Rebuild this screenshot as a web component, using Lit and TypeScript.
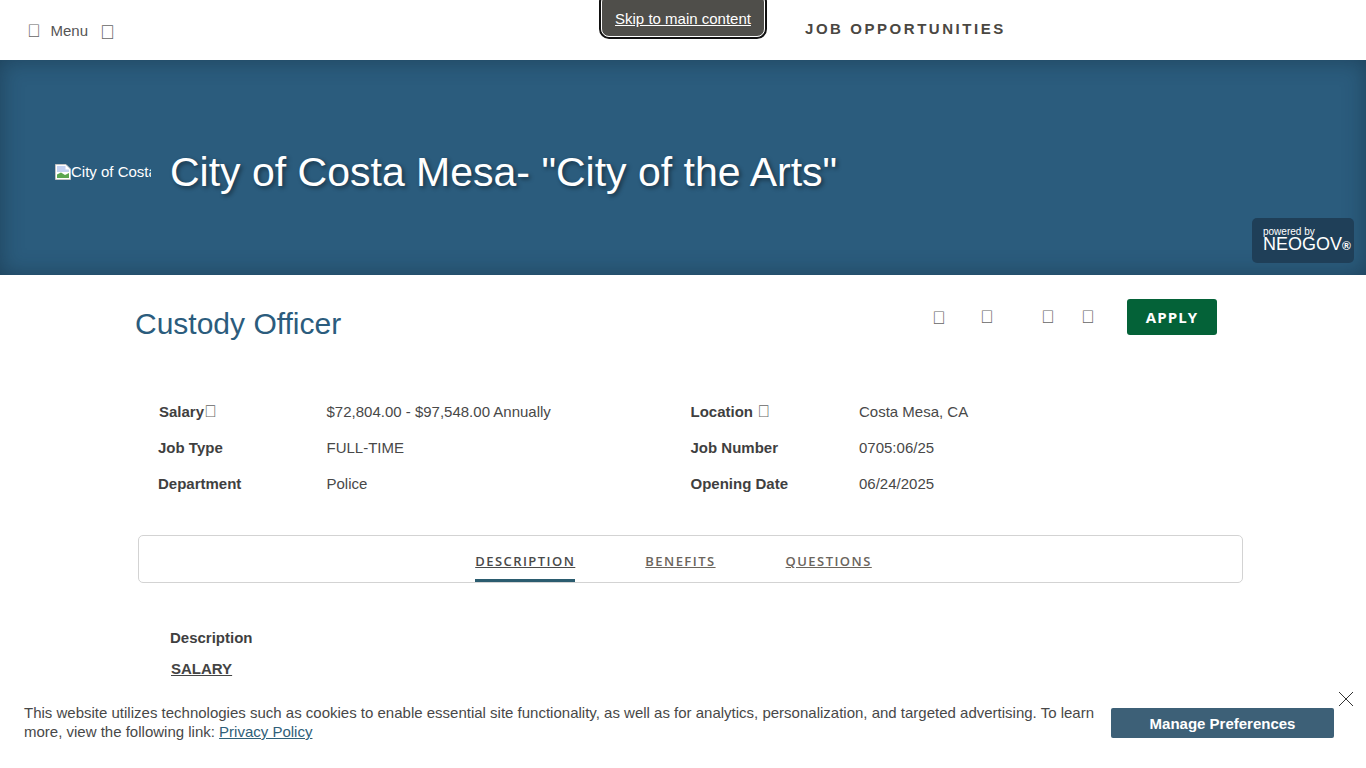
import { css, html, LitElement } from 'lit';
import { customElement } from 'lit/decorators.js';

const TOFU = '\ue900';

@customElement('app-root')
export class AppRoot extends LitElement {

    static get styles() {
        return css`
      :host {
        display: block;
        position: relative;
        height: 768px;
        overflow: hidden;
        background: #fff;
        color: #484848;
        font-family: "Liberation Sans", Arial, sans-serif;
        font-size: 15px;
      }
      a { color: inherit; }
      .skip {
        position: absolute;
        top: -8px;
        left: 599px;
        width: 168px;
        height: 47px;
        box-sizing: border-box;
        padding-top: 16px;
        border: 2px solid #111;
        border-radius: 10px;
        outline: 1px solid #fff;
        outline-offset: -3px;
        background: #4f4e4a;
        color: #fff;
        font-size: 15px;
        line-height: 18px;
        text-align: center;
      }
      .top {
        display: flex;
        height: 60px;
        box-sizing: border-box;
      }
      .menu {
        display: flex;
        align-items: flex-start;
        width: 805px;
        padding: 22px 0 0 27px;
        box-sizing: border-box;
        color: #555;
        line-height: 17px;
      }
      .menu .box { margin-top: 1px; color: #666; font-size: 18px; line-height: 17px; }
      .menu span.label { margin: 0 12px 0 10px; }
      .menu .box.last { margin-top: 2px; font-size: 20px; }
      .brand {
        padding-top: 20px;
        font-size: 15px;
        line-height: 18px;
        font-weight: 700;
        letter-spacing: 2.55px;
        color: #4a4742;
      }
      .banner {
        position: relative;
        display: flex;
        align-items: center;
        height: 215px;
        padding-left: 55px;
        box-sizing: border-box;
        background: #2b5c7d;
        box-shadow: inset 0 0 22px rgba(15, 35, 50, .45);
      }
      .logo {
        display: flex;
        align-items: center;
        width: 96px;
        height: 20px;
        margin-top: 8px;
        overflow: hidden;
        flex: none;
        color: #fff;
        font-size: 15px;
        white-space: nowrap;
      }
      .logo svg { flex: none; }
      .banner h1 {
        margin: 9px 0 0 19px;
        font-size: 41px;
        line-height: 46px;
        font-weight: 400;
        color: #fff;
        text-shadow: 2px 2px 4px rgba(0, 0, 0, .45);
      }
      .powered {
        position: absolute;
        right: 12px;
        bottom: 12px;
        width: 102px;
        height: 45px;
        box-sizing: border-box;
        padding: 9px 0 0 11px;
        border-radius: 5px;
        background: #1f3f58;
        color: #fff;
      }
      .powered small { display: block; font-size: 10px; line-height: 10px; }
      .powered b { display: block; font-size: 18px; line-height: 14px; font-weight: 400; white-space: nowrap; }
      .powered b i { font-style: normal; font-weight: 700; font-size: 12px; }
      .content { padding: 0 0 0 135px; }
      .title {
        display: flex;
        align-items: flex-start;
        height: 105px;
        padding-top: 24px;
        box-sizing: border-box;
      }
      .title h2 {
        width: 793px;
        margin: 7px 0 0;
        font-size: 30px;
        line-height: 36px;
        font-weight: 400;
        color: #2b5c7d;
      }
      .tools {
        display: flex;
        width: 199px;
        padding: 10px 0 0 4px;
        box-sizing: border-box;
        color: #666;
        font-size: 18px;
        line-height: 17px;
      }
      .tools span:nth-child(1) { width: 48px; padding-top: 1px; }
      .tools span:nth-child(2) { width: 61px; }
      .tools span:nth-child(3) { width: 40px; }
      .apply {
        width: 90px;
        height: 36px;
        border-radius: 3px;
        background: #046238;
        color: #fff;
        font-family: "Open Sans", sans-serif;
        font-size: 15px;
        line-height: 36px;
        font-weight: 700;
        letter-spacing: 1.1px;
        text-align: center;
      }
      .facts {
        display: grid;
        grid-template-columns: 168.5px 364px 168.5px 1fr;
        grid-auto-rows: 36px;
        padding-left: 23px;
        margin-top: 14px;
        line-height: 36px;
        font-size: 15px;
      }
      .facts b { color: #3f3f3f; }
      .facts b.nudge { padding-left: 1px; }
      .facts b em { font-style: normal; font-weight: 400; color: #666; font-size: 17px; }
      .tabs {
        display: flex;
        justify-content: center;
        gap: 70px;
        width: 1105px;
        height: 48px;
        margin: 33px 0 0 3px;
        padding-right: 34px;
        box-sizing: border-box;
        border: 1px solid #d3d3d3;
        border-radius: 5px;
      }
      .tabs a {
        height: 46px;
        box-sizing: border-box;
        padding-top: 16px;
        font-family: "Open Sans", sans-serif;
        font-size: 13px;
        line-height: 18px;
        font-weight: 600;
        letter-spacing: 1.45px;
        color: #6b655d;
        text-decoration: underline;
      }
      .tabs a.on {
        color: #4a4a4a;
        border-bottom: 3px solid #2b5c6f;
      }
      .desc { padding: 46px 0 0 35px; }
      .desc h3 { margin: 0; font-size: 15px; line-height: 18px; color: #3f3f3f; }
      .desc p {
        margin: 13px 0 0 1px;
        font-size: 15px;
        line-height: 18px;
        font-weight: 700;
        color: #444;
        text-decoration: underline;
      }
      .cookie {
        position: fixed;
        left: 0;
        right: 0;
        bottom: 0;
        height: 84px;
        display: flex;
        align-items: flex-start;
        padding: 19px 32px 0 24px;
        box-sizing: border-box;
        background: #fff;
      }
      .cookie p {
        width: 1087px;
        margin: 0;
        font-size: 15px;
        line-height: 19px;
        color: #484848;
      }
      .cookie p a { color: #2f6079; }
      .prefs {
        width: 223px;
        height: 30px;
        margin-top: 5px;
        border-radius: 2px;
        background: #3d6077;
        color: #fff;
        font-size: 15px;
        line-height: 32px;
        font-weight: 700;
        text-align: center;
      }
      .close {
        position: absolute;
        top: 7px;
        right: 12px;
      }
      `;
    }

    render() {
        return html`
      <div class="top">
        <div class="menu">
          <span class="box">${TOFU}</span>
          <span class="label">Menu</span>
          <span class="box last">${TOFU}</span>
        </div>
        <div class="brand">JOB OPPORTUNITIES</div>
      </div>
      <a class="skip" href="#main">Skip to main content</a>
      <div class="banner">
        <div class="logo">
          <svg width="16" height="16" viewBox="0 0 16 16">
            <path d="M0.5 0.5H11L15.5 5V15.5H0.5Z" fill="#fff" stroke="#c4c4c4"/>
            <path d="M2 2H10.5V5.5H14V8H2Z" fill="#c4d2f2"/>
            <path d="M2 14V10.5L6 8.5L10 11L14 9V14Z" fill="#5aa650"/>
          </svg>
          <span>City of Costa Mesa</span>
        </div>
        <h1>City of Costa Mesa- "City of the Arts"</h1>
        <div class="powered">
          <small>powered by</small>
          <b>NEOGOV<i>®</i></b>
        </div>
      </div>
      <div class="content" id="main">
        <div class="title">
          <h2>Custody Officer</h2>
          <div class="tools">
            <span>${TOFU}</span><span>${TOFU}</span><span>${TOFU}</span><span>${TOFU}</span>
          </div>
          <div class="apply">APPLY</div>
        </div>
        <div class="facts">
          <b class="nudge">Salary<em>${TOFU}</em></b><span>$72,804.00 - $97,548.00 Annually</span>
          <b>Location <em>${TOFU}</em></b><span>Costa Mesa, CA</span>
          <b>Job Type</b><span>FULL-TIME</span>
          <b>Job Number</b><span>0705:06/25</span>
          <b>Department</b><span>Police</span>
          <b>Opening Date</b><span>06/24/2025</span>
        </div>
        <div class="tabs">
          <a class="on" href="#d">DESCRIPTION</a>
          <a href="#b">BENEFITS</a>
          <a href="#q">QUESTIONS</a>
        </div>
        <div class="desc">
          <h3>Description</h3>
          <p>SALARY</p>
        </div>
      </div>
      <div class="cookie">
        <p>This website utilizes technologies such as cookies to enable essential site functionality, as well as for analytics, personalization, and targeted advertising. To learn more, view the following link: <a href="#privacy">Privacy Policy</a></p>
        <div class="prefs">Manage Preferences</div>
        <svg class="close" width="16" height="16" viewBox="0 0 16 16">
          <path d="M1 1L15 15M15 1L1 15" stroke="#333" fill="none"/>
        </svg>
      </div>
    `;
    }
}
